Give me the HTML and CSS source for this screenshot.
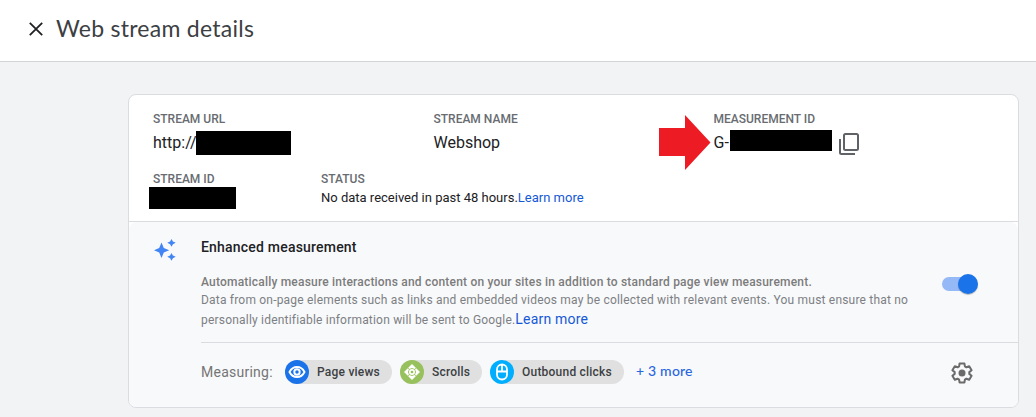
FILE: index.html
```html
<!DOCTYPE html>
<html lang="en">
<head>
<meta charset="utf-8">
<title>Web stream details</title>
<link rel="stylesheet" href="styles.css">
</head>
<body>
<header class="topbar">
  <svg class="close" viewBox="0 0 14 14"><path d="M.8.8 13.2 13.2M13.2.8.8 13.2"/></svg>
  <h1 class="title">Web stream details</h1>
</header>
<main class="card">
  <section class="details">
    <div class="row row-main">
      <div class="field">
        <div class="label">STREAM URL</div>
        <div class="value"><span class="url">http://</span><span class="redact redact-url"></span></div>
      </div>
      <div class="field">
        <div class="label label-name">STREAM NAME</div>
        <div class="value">Webshop</div>
      </div>
      <div class="field field-id">
        <svg class="arrow" viewBox="0 0 52 56"><path d="M0 14h26V1l25.500 27.500L26 56V42H0z"/></svg>
        <div class="label label-id">MEASUREMENT ID</div>
        <div class="value"><span class="gid">G-</span><span class="redact redact-gid"></span>
          <svg class="copy" viewBox="0 0 20 22"><path d="M6.500 1h11q1.500 0 1.500 1.500v13q0 1.500-1.500 1.500h-11Q5 17 5 15.500v-13Q5 1 6.500 1zM1 6v13.500q0 1.500 1.500 1.500H16"/></svg>
        </div>
      </div>
    </div>
    <div class="row row-status">
      <div class="field">
        <div class="label">STREAM ID</div>
        <div class="redact redact-sid"></div>
      </div>
      <div class="field">
        <div class="label">STATUS</div>
        <div class="status">No data received in past 48 hours.<a class="link">Learn more</a></div>
      </div>
    </div>
  </section>
  <section class="enhanced">
    <svg class="sparkle" viewBox="0 0 22 22"><path d="M7.500 3.500 9.800 8.900l5.400 2.300-5.400 2.300L7.500 19l-2.300-5.500L0 11.200l5.200-2.300zM17.500 0l1.400 2.400 2.800 1.400-2.800 1.400-1.400 2.600-1.400-2.600-2.800-1.400 2.800-1.400zM17.500 14l1.400 2.400 2.800 1.400-2.800 1.400-1.400 2.600-1.400-2.600-2.800-1.400 2.800-1.400z"/></svg>
    <div class="content">
      <h2 class="heading">Enhanced measurement</h2>
      <div class="summary">
        <div class="copytext">
          <p class="lead">Automatically measure interactions and content on your sites in addition to standard page view measurement.</p>
          <p class="para">Data from on-page elements such as links and embedded videos may be collected with relevant events. You must ensure that no</p>
          <p class="para para-last">personally identifiable information will be sent to Google.<a class="link link-large">Learn more</a></p>
        </div>
        <span class="toggle"><span class="thumb"></span></span>
      </div>
      <div class="measuring">
        <span class="measuring-label">Measuring:</span>
        <span class="chip chip-views"><svg class="chip-icon" viewBox="0 0 24 24"><circle cx="12" cy="12" r="12" fill="#1a73e8"/><path d="M4.500 12Q7 7 12 7t7.500 5Q17 17 12 17t-7.500-5z" fill="none" stroke="#fff" stroke-width="1.900"/><circle cx="12" cy="12" r="2.700" fill="none" stroke="#fff" stroke-width="1.900"/></svg><span class="chip-text">Page views</span></span>
        <span class="chip chip-scrolls"><svg class="chip-icon" viewBox="0 0 24 24"><circle cx="12" cy="12" r="12" fill="#97c15c"/><path d="m12 4 3.800 3.800-1.300 1.200L12 7.900 9.500 9 8.200 7.800zM20 12l-3.800 3.800-1.200-1.300 1.100-2.500L15 9.500l1.200-1.300zM12 20l-3.800-3.800L9.500 15l2.500 1.100 2.500-1.100 1.300 1.200zM4 12l3.800-3.800L9 9.500 7.900 12 9 14.500l-1.200 1.300z" fill="#fff"/><circle cx="12" cy="12" r="2.200" fill="none" stroke="#fff" stroke-width="1.700"/></svg><span class="chip-text">Scrolls</span></span>
        <span class="chip chip-clicks"><svg class="chip-icon" viewBox="0 0 24 24"><circle cx="12" cy="12" r="12" fill="#00aeff"/><path d="M7 9.500a5 5 0 0 1 10 0v5a5 5 0 0 1-10 0zM7 11.500h10M12 5v6.500" fill="none" stroke="#fff" stroke-width="1.800"/></svg><span class="chip-text">Outbound clicks</span></span>
        <a class="more">+ 3 more</a>
        <svg class="gear" viewBox="0 0 22 22"><path d="M8.600 1.500h4.800l.5 2.900 1.500.9 2.800-1.100 2.400 4.100-2.300 1.800v1.800l2.300 1.800-2.400 4.100-2.800-1.100-1.500.9-.5 2.900H8.600l-.5-2.900-1.500-.9-2.800 1.100-2.400-4.100 2.300-1.800v-1.800L1.400 8.300l2.400-4.100 2.800 1.100 1.500-.9z" fill="none" stroke="#6b6b6b" stroke-width="2" stroke-linejoin="round"/><circle cx="11" cy="11" r="3.500" fill="#6b6b6b"/></svg>
      </div>
    </div>
  </section>
</main>
</body>
</html>
```
FILE: styles.css
```css
* { box-sizing: border-box; }
body { margin: 0; height: 417px; overflow: hidden; background: #f1f3f4; font-family: Roboto, sans-serif; color: #202124; }
h1, h2, p { margin: 0; font-weight: 400; }
svg { display: block; flex: none; }

.topbar { display: flex; align-items: center; height: 62px; padding: 0 0 4px 29px; background: #fff; border-bottom: 1px solid #d2d4d7; }
.close { width: 14px; height: 14px; fill: none; stroke: #202124; stroke-width: 1.8; }
.title { margin: -2px 0 0 13px; font: 400 23px/28px Lato, sans-serif; letter-spacing: .26px; color: #3c4043; white-space: nowrap; }

.card { width: 891px; height: 314px; margin: 32px 0 0 128px; border: 1px solid #dadce0; border-radius: 8px; background: #fff; overflow: hidden; }
.details { height: 127px; padding: 16px 24px 0; border-bottom: 1px solid #dadce0; }
.row { display: grid; }
.row-main { grid-template-columns: 280.5px 280px 1fr; height: 60px; }
.row-status { grid-template-columns: 168px 1fr; }
.field { white-space: nowrap; }
.field-id { position: relative; }
.label { font-size: 12px; font-weight: 500; line-height: 16px; color: #686c71; }
.value { display: flex; height: 32px; font-size: 16px; line-height: 32px; }
.redact { display: block; background: #000; }
.url { width: 43px; }
.redact-url { width: 95px; height: 24px; margin-top: 4px; }
.gid { width: 16px; }
.redact-gid { width: 102px; height: 21px; margin-top: 3px; }
.redact-sid { width: 87px; height: 22px; margin-left: -4px; }
.copy { width: 20px; height: 22px; margin: 6px 0 0 7px; fill: none; stroke: #5f6368; stroke-width: 2; }
.arrow { position: absolute; left: -55px; top: 3px; width: 52px; height: 56px; fill: #ed1c24; }
.status { font-size: 13px; line-height: 22px; }
.link { color: #1558d6; }

.enhanced { display: flex; height: 185px; padding: 17px 0 0 25px; background: #f8f9fb; border-radius: 8px 8px 0 0; }
.sparkle { width: 22px; height: 22px; fill: #4285f4; }
.content { width: 817px; margin: -1px 0 0 25px; }
.heading { font-size: 14px; font-weight: 500; line-height: 18px; letter-spacing: .2px; }
.summary { display: flex; justify-content: space-between; height: 86px; padding: 17px 40px 0 0; white-space: nowrap; }
.lead { font-size: 12px; font-weight: 500; line-height: 18px; letter-spacing: .2px; color: #7c7c7c; }
.para { font-size: 12px; line-height: 19px; letter-spacing: .2px; color: #7d8083; }
.link-large { font-size: 14px; }
.toggle { position: relative; width: 34px; height: 14px; margin: 4px 2px 0 0; border-radius: 7px; background: #95b8f7; }
.thumb { position: absolute; right: -2px; top: -3px; width: 20px; height: 20px; border-radius: 50%; background: #1a73e8; box-shadow: 0 1px 1px rgba(0,0,0,.25); }
.measuring { display: flex; align-items: center; height: 59px; padding-right: 45px; border-top: 1px solid #dadce0; white-space: nowrap; }
.measuring-label { width: 84px; font-size: 14px; letter-spacing: .25px; color: #757575; }
.chip { display: flex; align-items: center; height: 24px; margin-right: 8px; border-radius: 12px; background: #e0e0e0; }
.chip-views { width: 107px; }
.chip-scrolls { width: 82px; }
.chip-clicks { width: 134px; }
.chip-icon { width: 24px; height: 24px; }
.chip-text { margin: -1px 0 0 8px; font-size: 12px; font-weight: 500; letter-spacing: .22px; color: #3c4043; }
.more { margin: -2px 0 0 4px; font: 500 14px/20px Lato, sans-serif; letter-spacing: .2px; color: #2a66e0; }
.gear { width: 22px; height: 22px; margin: 2px 0 0 auto; }
```
